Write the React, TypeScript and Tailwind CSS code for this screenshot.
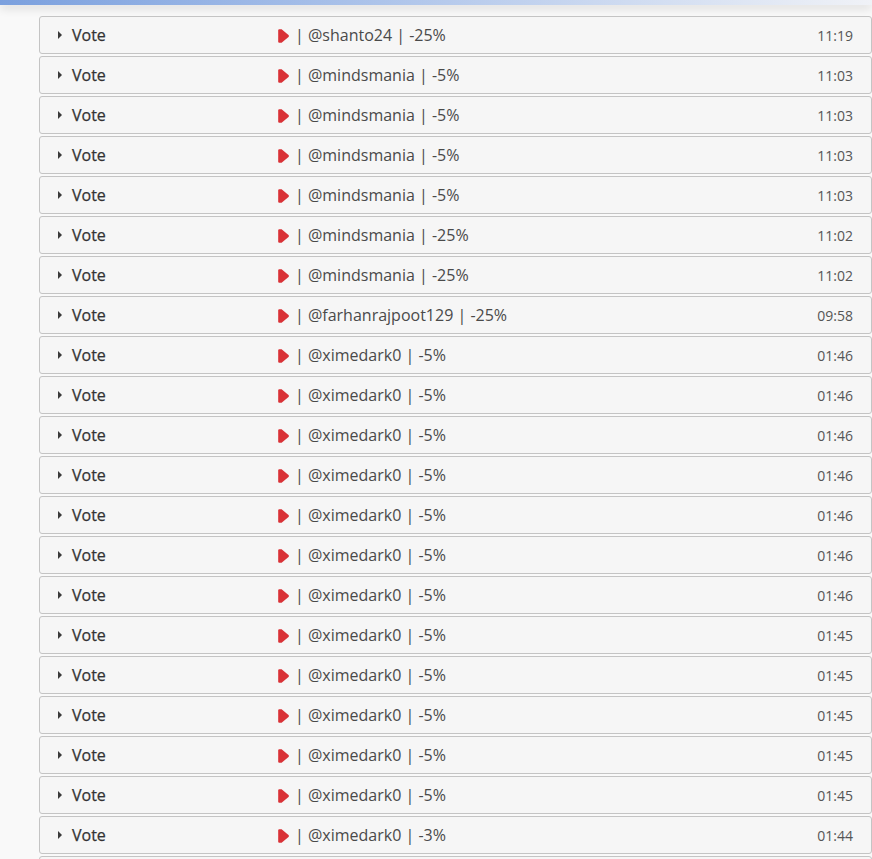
const rows: [string, string, string][] = [
  ["shanto24", "-25%", "11:19"],
  ["mindsmania", "-5%", "11:03"],
  ["mindsmania", "-5%", "11:03"],
  ["mindsmania", "-5%", "11:03"],
  ["mindsmania", "-5%", "11:03"],
  ["mindsmania", "-25%", "11:02"],
  ["mindsmania", "-25%", "11:02"],
  ["farhanrajpoot129", "-25%", "09:58"],
  ["ximedark0", "-5%", "01:46"],
  ["ximedark0", "-5%", "01:46"],
  ["ximedark0", "-5%", "01:46"],
  ["ximedark0", "-5%", "01:46"],
  ["ximedark0", "-5%", "01:46"],
  ["ximedark0", "-5%", "01:46"],
  ["ximedark0", "-5%", "01:46"],
  ["ximedark0", "-5%", "01:45"],
  ["ximedark0", "-5%", "01:45"],
  ["ximedark0", "-5%", "01:45"],
  ["ximedark0", "-5%", "01:45"],
  ["ximedark0", "-5%", "01:45"],
  ["ximedark0", "-3%", "01:44"],
];

const Row = ({ user, pct, time }: { user: string; pct: string; time: string }) => {
  return (
    <div className="flex h-[38px] shrink-0 items-center rounded-[3px] border border-[#c4c4c4] bg-[#f6f6f6] px-[18px] text-[#4a4a4a]">
      <svg width="4" height="8" viewBox="0 0 4 8" className="mr-[10px] shrink-0">
        <path d="M0 0 L4 4 L0 8 Z" fill="#3a3a3a" />
      </svg>
      <span className="w-[206px] shrink-0 text-[16px] font-medium text-[#333333] [-webkit-text-stroke:0.25px_#333333]">Vote</span>
      <svg width="11" height="14" viewBox="0 0 11 14" className="mt-[2px] mr-[6px] shrink-0">
        <path d="M0.9 0.3 L3.6 0.3 L10.8 6.2 L10.8 7.8 L3.6 13.7 L0.9 13.7 L0.2 13 L0.2 1 Z" fill="#d93237" />
      </svg>
      <span className="flex-1 text-[16px] whitespace-pre">
        | @{user} | {pct}
      </span>
      <span className="text-[14px] text-[#555555]">{time}</span>
    </div>
  );
};

export default function App() {
  return (
    <div className="relative h-[859px] w-[872px] overflow-hidden bg-[#f9f9f9] font-['Open_Sans',sans-serif]">
      <div className="h-[5px] bg-gradient-to-r from-[#7ba0de] to-[#f0f2f7] shadow-[0_3px_10px_rgba(0,0,0,0.16)]" />
      <div className="mt-[11px] ml-[39px] flex w-[833px] flex-col gap-[2px]">
        {rows.map((r, i) => (
          <Row key={i} user={r[0]} pct={r[1]} time={r[2]} />
        ))}
        <div className="h-[38px] shrink-0 rounded-[3px] border border-[#c4c4c4] bg-[#f6f6f6]" />
      </div>
    </div>
  );
}
